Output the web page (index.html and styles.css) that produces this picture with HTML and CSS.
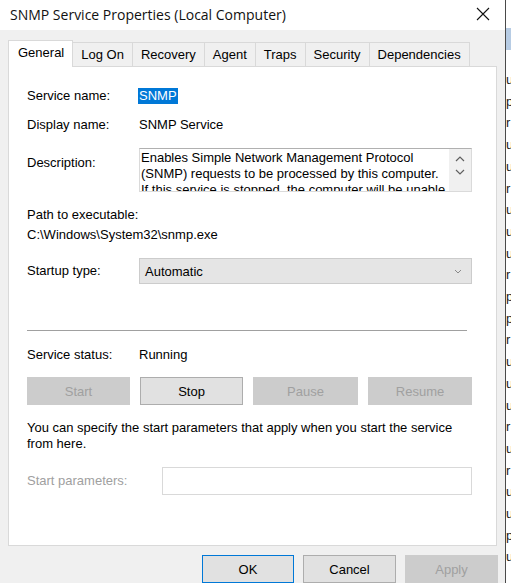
FILE: index.html
```html
<!DOCTYPE html>
<html lang="en">
<head>
	<meta charset="utf-8">
	<title>SNMP Service Properties</title>
	<link rel="stylesheet" href="styles.css">
</head>
<body>
	<div class="screen">
		<div class="window">
			<div class="titlebar">
				<span class="title">SNMP Service Properties (Local Computer)</span>
				<span class="close">
					<svg width="14" height="14" viewBox="0 0 14 14"><path d="M1 1 L13 13 M13 1 L1 13" stroke="#111" stroke-width="1.1" fill="none"/></svg>
				</span>
			</div>
			<div class="dialog">
				<div class="tabs">
					<div class="tab active">General</div>
					<div class="tab">Log On</div>
					<div class="tab">Recovery</div>
					<div class="tab">Agent</div>
					<div class="tab">Traps</div>
					<div class="tab">Security</div>
					<div class="tab">Dependencies</div>
				</div>
				<div class="panel">
					<div class="row r-name">
						<span class="label">Service name:</span>
						<span class="value"><span class="sel">SNMP</span></span>
					</div>
					<div class="row r-display">
						<span class="label">Display name:</span>
						<span class="value">SNMP Service</span>
					</div>
					<div class="row r-desc">
						<span class="label desc-label">Description:</span>
						<div class="descbox">
							<div class="desctext">Enables Simple Network Management Protocol (SNMP) requests to be processed by this computer. If this service is stopped, the computer will be unable to process SNMP requests.</div>
							<div class="scroll">
								<svg width="10" height="7" viewBox="0 0 10 7"><path d="M1 6 L5 2 L9 6" stroke="#606060" stroke-width="1.2" fill="none"/></svg>
								<svg width="10" height="7" viewBox="0 0 10 7"><path d="M1 1 L5 5 L9 1" stroke="#606060" stroke-width="1.2" fill="none"/></svg>
							</div>
						</div>
					</div>
					<div class="path">
						<div>Path to executable:</div>
						<div>C:\Windows\System32\snmp.exe</div>
					</div>
					<div class="row r-startup">
						<span class="label">Startup type:</span>
						<div class="combo">
							<span>Automatic</span>
							<svg width="8" height="5" viewBox="0 0 8 5"><path d="M1 1 L4 4 L7 1" stroke="#8a8a8a" stroke-width="1" fill="none"/></svg>
						</div>
					</div>
					<div class="sep"></div>
					<div class="row r-status">
						<span class="label">Service status:</span>
						<span class="value">Running</span>
					</div>
					<div class="btnrow">
						<div class="btn disabled">Start</div>
						<div class="btn">Stop</div>
						<div class="btn disabled">Pause</div>
						<div class="btn disabled">Resume</div>
					</div>
					<p class="note">You can specify the start parameters that apply when you start the service from here.</p>
					<div class="row r-params">
						<span class="label grey">Start parameters:</span>
						<div class="field"></div>
					</div>
				</div>
				<div class="footer">
					<div class="btn fbtn default">OK</div>
					<div class="btn fbtn">Cancel</div>
					<div class="btn fbtn disabled">Apply</div>
				</div>
			</div>
		</div>
		<div class="behind">
			<div class="bhead"></div>
			<div class="letters">u<br>p<br>r<br>u<br>u<br>r<br>u<br>u<br>u<br>r<br>p<br>p<br>r<br>u<br>u<br>u<br>r<br>u<br>r<br>u<br>u<br>p<br>u</div>
		</div>
	</div>
</body>
</html>
```

FILE: styles.css
```css
*{
	margin:0;
	padding:0;
	box-sizing: border-box;
}

body {
	background: #fff;
	font-family: "Liberation Sans", Arial, sans-serif;
	font-size: 13px;
	color: #000;
	overflow: hidden;
}

.screen {
	display: flex;
	width: 511px;
	height: 583px;
}

.window {
	width: 506px;
	border-right: 1px solid #4a4a4a;
	display: flex;
	flex-direction: column;
}

.titlebar {
	height: 30px;
	background: #fff;
	display: flex;
	align-items: center;
	justify-content: space-between;
	padding: 0 15px 2px 10px;
}

.title {
	font-family: "Open Sans", "Liberation Sans", sans-serif;
	font-size: 14px;
	color: #111;
}

.close {
	display: flex;
}

.dialog {
	flex: 1;
	background: #f0f0f0;
	padding: 10px 8px 0 8px;
}

.tabs {
	display: flex;
	height: 26px;
	align-items: flex-end;
}

.tab {
	height: 24px;
	line-height: 24px;
	padding: 0 8px;
	border: 1px solid #d9d9d9;
	border-bottom: none;
	border-left: none;
	background: #f0f0f0;
	color: #000;
}

.tab.active {
	height: 27px;
	margin-bottom: -1px;
	line-height: 24px;
	padding: 0 8px 0 9px;
	background: #fff;
	border-left: 1px solid #d9d9d9;
	position: relative;
}

.panel {
	background: #fff;
	border: 1px solid #d9d9d9;
	height: 480px;
	padding: 21px 24px 0 18px;
}

.row {
	display: flex;
	align-items: center;
}

.label {
	width: 112px;
	flex: none;
	line-height: 16px;
}

.value {
	line-height: 16px;
}

.sel {
	background: #0078d7;
	color: #fff;
	padding: 0 1px 0 1px;
	margin-left: -1px;
	display: inline-block;
}

.r-display {
	margin-top: 13px;
}

.r-desc {
	margin-top: 15px;
	align-items: flex-start;
}

.desc-label {
	margin-top: 7px;
}

.descbox {
	flex: 1;
	height: 44px;
	border: 1px solid #dadada;
	border-top-color: #b0b0b0;
	display: flex;
	overflow: hidden;
}

.desctext {
	flex: 1;
	padding: 1px 0 0 1px;
	line-height: 16px;
}

.scroll {
	width: 22px;
	background: #f0f0f0;
	display: flex;
	flex-direction: column;
	align-items: center;
	padding-top: 6px;
	gap: 7px;
}

.path {
	margin-top: 13px;
	line-height: 20px;
}

.r-startup {
	margin-top: 13px;
}

.combo {
	flex: 1;
	height: 26px;
	background: #e5e5e5;
	border: 1px solid #cccccc;
	display: flex;
	align-items: center;
	justify-content: space-between;
	padding: 0 9px 0 5px;
}

.sep {
	margin-top: 46px;
	height: 1px;
	background: #a0a0a0;
	margin-right: 5px;
}

.r-status {
	margin-top: 16px;
}

.btnrow {
	margin-top: 14px;
	display: grid;
	grid-template-columns: 103px 103px 105px 104px;
	gap: 0 10px;
}

.btn {
	height: 28px;
	line-height: 27px;
	text-align: center;
	background: #e1e1e1;
	border: 1px solid #adadad;
}

.btn.disabled {
	background: #cccccc;
	border-color: #cccccc;
	color: #a0a0a0;
}

.note {
	margin-top: 15px;
	line-height: 16px;
	padding-right: 5px;
}

.r-params {
	margin-top: 15px;
}

.label.grey {
	color: #a0a0a0;
	width: 135px;
}

.field {
	flex: 1;
	height: 28px;
	border: 1px solid #d9d9d9;
	background: #fff;
}

.footer {
	margin-top: 9px;
	display: flex;
	justify-content: flex-end;
	gap: 9px;
	margin-right: -1px;
}

.fbtn {
	width: 93px;
}

.fbtn.default {
	border-color: #0078d7;
	width: 92px;
}

.behind {
	flex: 1;
	background: #fff;
	overflow: hidden;
}

.bhead {
	margin-top: 28px;
	height: 22px;
	background: #b7cce4;
}

.letters {
	margin-top: 19px;
	line-height: 21.7px;
	font-size: 13px;
	color: #222;
}
```
